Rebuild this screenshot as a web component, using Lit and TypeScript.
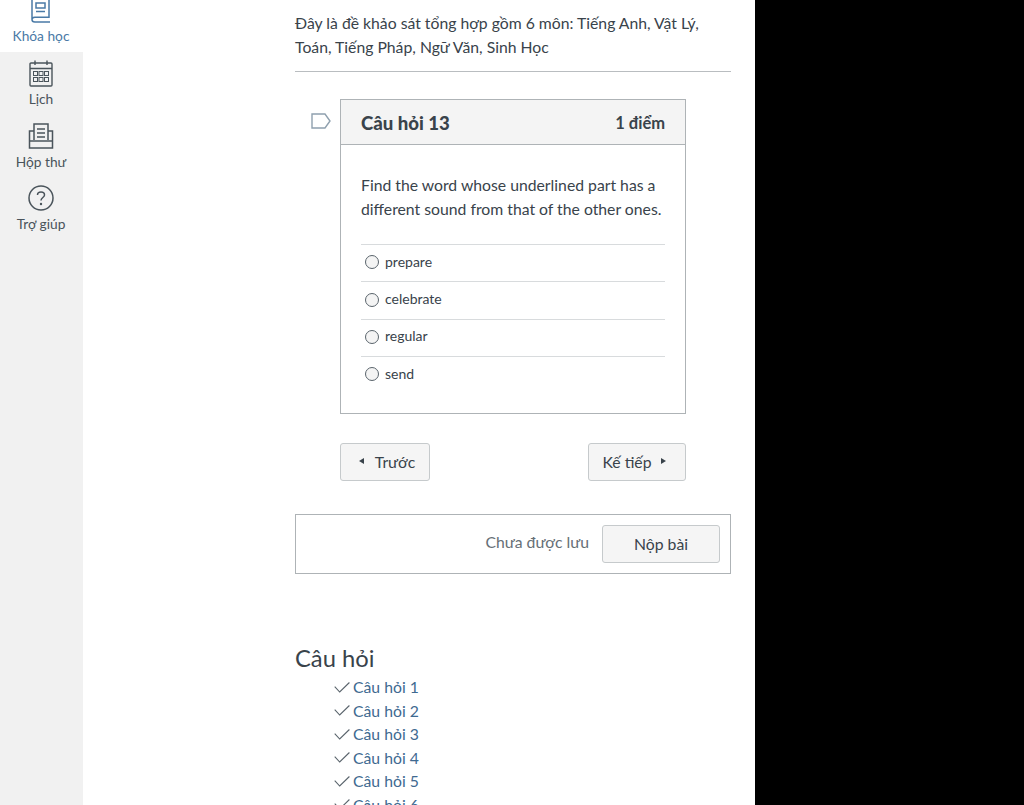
import { LitElement, html, css, svg } from "lit";
import { customElement } from "lit/decorators.js";

const icons = {
  book: svg`<svg class="ico" width="24" height="26" viewBox="0 0 24 26" fill="none" stroke="currentColor" stroke-width="1.5"><path d="M3 1V21.5C3 23.2 4.2 24 5.8 24H21M3 21.5C3 20 4.2 19.2 5.8 19.2H20V1"/><rect x="7" y="5" width="9" height="5"/><path d="M7 13.5H16"/></svg>`,
  cal: svg`<svg class="ico" width="24" height="27" viewBox="0 0 24 27" fill="none" stroke="currentColor" stroke-width="1.4"><rect x="1" y="3" width="22" height="23" rx="1"/><path d="M1 8.5H23M6 .5V5M18 .5V5" /><g stroke-width="1"><rect x="4.5" y="11.5" width="4" height="4"/><rect x="10" y="11.5" width="4" height="4"/><rect x="15.5" y="11.5" width="4" height="4"/><rect x="4.5" y="17.5" width="4" height="4"/><rect x="10" y="17.5" width="4" height="4"/><rect x="15.5" y="17.5" width="4" height="4"/></g></svg>`,
  inbox: svg`<svg class="ico" width="26" height="26" viewBox="0 0 26 26" fill="none" stroke="currentColor" stroke-width="1.5"><path d="M6 17V1H20V17"/><path d="M9 6H17M9 10H17M9 14H17"/><path d="M6 8H1.5V25H24.5V8H20"/><path d="M1.5 18H24.5"/></svg>`,
  help: svg`<svg class="ico" width="26" height="26" viewBox="0 0 26 26"><circle cx="13" cy="13" r="12" fill="none" stroke="currentColor" stroke-width="1.5"/><path d="M9.5 10C9.5 8 11 7 13 7C15 7 16.5 8.2 16.5 10C16.5 12.5 13 12.6 13 15.5" fill="none" stroke="currentColor" stroke-width="1.5"/><circle cx="13" cy="19" r="1.2" fill="currentColor"/></svg>`,
};

const check = svg`<svg class="check" width="16" height="11" viewBox="0 0 16 11" fill="none" stroke="#5a646c" stroke-width="1.1"><path d="M.7 4.6L5.7 10L15.4 .5"/></svg>`;

@customElement("app-root")
export class AppRoot extends LitElement {
  static styles = css`
    :host {
      display: flex;
      width: 1024px;
      height: 805px;
      overflow: hidden;
      background: #000;
      font-family: Lato, "Noto Sans", sans-serif;
      color: #39434b;
    }
    .side {
      width: 83px;
      flex: none;
      background: #f1f1f1;
      display: flex;
      flex-direction: column;
      align-items: stretch;
      font-size: 13.75px;
      color: #4a545b;
    }
    .nav {
      display: flex;
      flex-direction: column;
      align-items: center;
      height: 63px;
      padding: 8px 1px 0 0;
      box-sizing: border-box;
    }
    .nav span { line-height: 18px; white-space: nowrap; }
    .nav.cal span { margin-top: 3px; }
    .nav.inbox span { margin-top: 4px; }
    .nav.help { padding-top: 7px; }
    .nav.help span { margin-top: 4px; }
    .ico { display: block; flex: none; }
    .active {
      height: 52px;
      background: #fff;
      color: #4a7aa6;
      display: flex;
      flex-direction: column;
      align-items: center;
      justify-content: flex-end;
      overflow: hidden;
      padding: 0 1px 7px 0;
      box-sizing: border-box;
    }
    .active span { line-height: 18px; margin-top: 3px; }
    .main {
      width: 672px;
      flex: none;
      background: #fff;
      box-sizing: border-box;
      padding: 11px 24px 0 212px;
    }
    .intro {
      margin: 0;
      font-size: 15.75px;
      line-height: 23.5px;
      padding-bottom: 12px;
      border-bottom: 1px solid #b9bdc0;
      height: 48px;
    }
    .qwrap {
      margin: 27px 45px 0 45px;
      position: relative;
    }
    .flag {
      position: absolute;
      left: -29px;
      top: 14px;
    }
    .card {
      border: 1px solid #aeb3b6;
      height: 315px;
      box-sizing: border-box;
    }
    .chead {
      height: 45px;
      box-sizing: border-box;
      background: #f4f4f4;
      border-bottom: 1px solid #aeb3b6;
      display: flex;
      align-items: center;
      justify-content: space-between;
      padding: 2px 20px 0;
      font-weight: 700;
    }
    .chead b { font-size: 18.6px; color: #39434b; }
    .chead em { font-style: normal; font-size: 16.5px; }
    .cbody { padding: 28px 20px 0; }
    .cbody p {
      margin: 0 0 23px;
      font-size: 15.75px;
      line-height: 24px;
    }
    .opt {
      height: 37.4px;
      box-sizing: border-box;
      border-top: 1px solid #d8dbdd;
      display: flex;
      align-items: center;
      gap: 6px;
      font-size: 14px;
      padding: 0 0 2px 4px;
    }
    .opt span { margin-top: -2px; }
    .radio {
      width: 12px;
      height: 12px;
      border: 1px solid #5a646c;
      border-radius: 50%;
      background: #f4f4f4;
      flex: none;
    }
    .pager {
      display: flex;
      justify-content: space-between;
      margin-top: 29px;
    }
    .btn {
      height: 38px;
      box-sizing: border-box;
      border: 1px solid #c6cacc;
      border-radius: 3px;
      background: #f5f5f5;
      display: flex;
      align-items: center;
      justify-content: center;
      font-size: 15.75px;
      color: #39434b;
      padding-bottom: 2px;
    }
    .prev { width: 90px; gap: 11px; padding-left: 4px; }
    .next { width: 98px; gap: 9px; padding-right: 6px; }
    .tri { width: 0; height: 0; border-top: 3.5px solid transparent; border-bottom: 3.5px solid transparent; }
    .tri.l { border-right: 5px solid #39434b; }
    .tri.r { border-left: 5px solid #39434b; }
    .submit {
      margin-top: 33px;
      height: 60px;
      box-sizing: border-box;
      border: 1px solid #aeb3b6;
      display: flex;
      align-items: center;
      justify-content: flex-end;
      padding-right: 10px;
      gap: 13px;
      font-size: 15.75px;
    }
    .submit .status { color: #666f76; margin-top: -5px; }
    .send { width: 118px; }
    h2 {
      margin: 69px 0 0;
      font-size: 23.75px;
      font-weight: 400;
      line-height: 30px;
    }
    ul {
      list-style: none;
      margin: 2px 0 0;
      padding: 0 0 0 39px;
    }
    li {
      height: 23.5px;
      display: flex;
      align-items: center;
      gap: 3px;
      font-size: 15.75px;
      color: #3f6a91;
    }
    .check { margin-top: 1px; }
    .black { flex: 1; background: #000; }
  `;

  render() {
    const opts = ["prepare", "celebrate", "regular", "send"];
    const qs = [1, 2, 3, 4, 5, 6];
    return html`
      <aside class="side">
        <div class="active">${icons.book}<span>Khóa học</span></div>
        <div class="nav cal">${icons.cal}<span>Lịch</span></div>
        <div class="nav inbox">${icons.inbox}<span>Hộp thư</span></div>
        <div class="nav help">${icons.help}<span>Trợ giúp</span></div>
      </aside>
      <main class="main">
        <p class="intro">Đây là đề khảo sát tổng hợp gồm 6 môn: Tiếng Anh, Vật Lý, Toán, Tiếng Pháp, Ngữ Văn, Sinh Học</p>
        <div class="qwrap">
          <svg class="flag" width="20" height="16" viewBox="0 0 20 16" fill="none" stroke="#8fa0ae" stroke-width="1.4"><path d="M1 1H14L19 8L14 15H1Z"/></svg>
          <section class="card">
            <header class="chead"><b>Câu hỏi 13</b><em>1 điểm</em></header>
            <div class="cbody">
              <p>Find the word whose underlined part has a different sound from that of the other ones.</p>
              ${opts.map((o) => html`<div class="opt"><i class="radio"></i><span>${o}</span></div>`)}
            </div>
          </section>
          <div class="pager">
            <div class="btn prev"><i class="tri l"></i>Trước</div>
            <div class="btn next">Kế tiếp<i class="tri r"></i></div>
          </div>
        </div>
        <div class="submit">
          <span class="status">Chưa được lưu</span>
          <div class="btn send">Nộp bài</div>
        </div>
        <h2>Câu hỏi</h2>
        <ul>
          ${qs.map((n) => html`<li>${check}<span>Câu hỏi ${n}</span></li>`)}
        </ul>
      </main>
      <div class="black"></div>
    `;
  }
}
